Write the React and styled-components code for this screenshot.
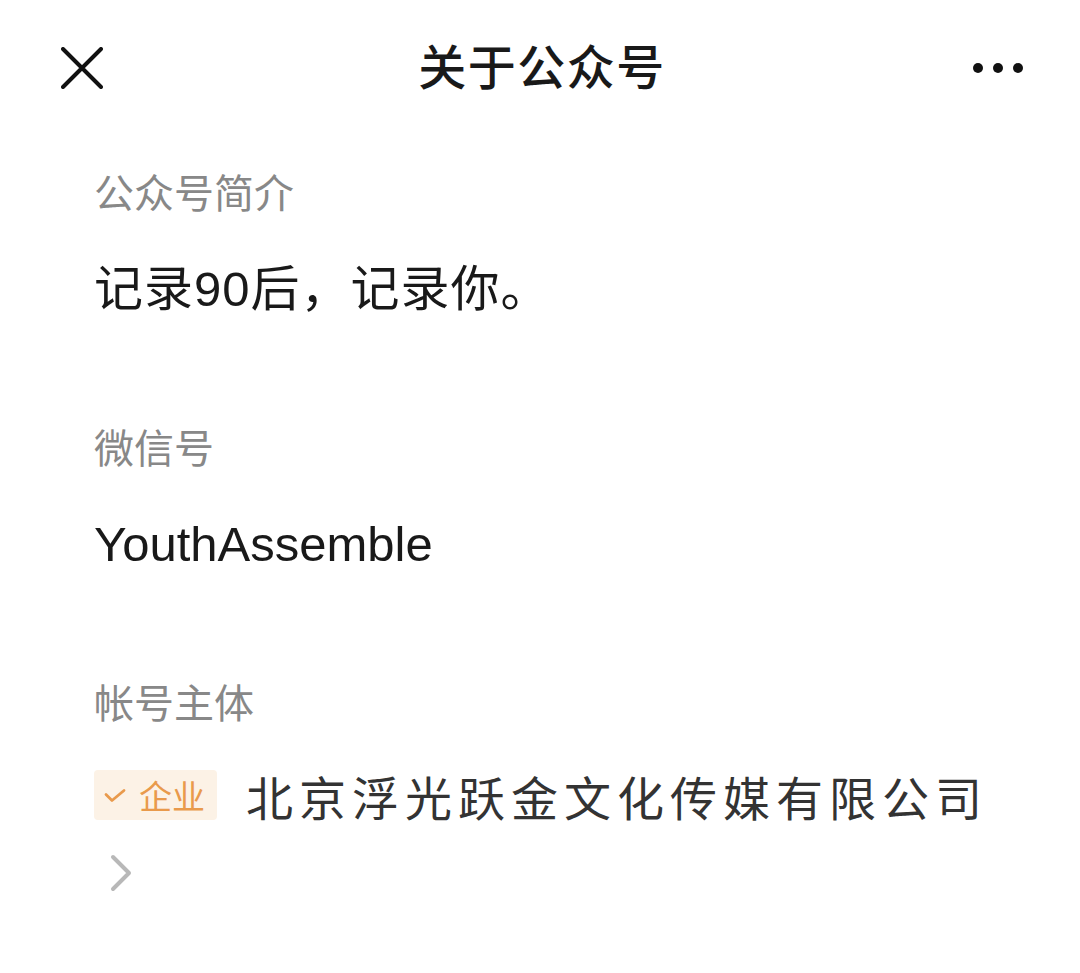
import React from 'react';
import styled, { createGlobalStyle } from 'styled-components';

const GlobalStyle = createGlobalStyle`
    html, body {
        margin: 0;
        padding: 0;
        background: #ffffff;
    }
    body {
        font-family: "Liberation Sans", "Noto Sans CJK SC", sans-serif;
        -webkit-font-smoothing: antialiased;
    }
`;

const Page = styled.div`
    width: 1080px;
    min-height: 973px;
    background: #ffffff;
`;

const Header = styled.header`
    height: 136px;
    display: grid;
    grid-template-columns: 1fr auto 1fr;
    align-items: center;
    padding: 0 57px 0 61px;
    box-sizing: border-box;
`;

const IconButton = styled.button`
    border: none;
    background: none;
    padding: 0;
    margin: 0;
    display: flex;
    align-items: center;
    justify-self: ${props => props.$end ? 'end' : 'start'};
    cursor: pointer;
`;

const Title = styled.h1`
    margin: 0;
    padding-bottom: 8px;
    font-size: 48px;
    font-weight: 500;
    color: #191919;
    letter-spacing: 1.5px;
`;

const Content = styled.main`
    padding: 30px 70px 0 94px;
`;

const Section = styled.section`
    display: flex;
    flex-direction: column;
    margin-bottom: 95px;
`;

const Label = styled.div`
    font-size: 40px;
    line-height: 56px;
    color: #888888;
    margin-bottom: 30px;
`;

const Value = styled.div`
    font-size: 49px;
    line-height: 74px;
    color: #191919;
    letter-spacing: ${props => props.$cjk ? '1px' : '0'};
`;

const OwnerRow = styled.div`
    display: flex;
    align-items: center;
    height: 74px;
    padding-bottom: 8px;
    box-sizing: border-box;
`;

const Badge = styled.span`
    display: inline-flex;
    align-items: center;
    gap: 13px;
    height: 50px;
    padding: 0 12px 0 10px;
    border-radius: 4px;
    background: #fcf2e6;
    color: #e99a4c;
    font-size: 33px;
    margin-right: 29px;
`;

const Company = styled.span`
    font-size: 47px;
    letter-spacing: 6px;
    color: #333333;
    white-space: nowrap;
`;

const More = styled.span`
    display: flex;
    height: 74px;
    align-items: center;
    padding-left: 16px;
`;

const CloseIcon = () => (
    <svg width="42" height="42" viewBox="0 0 42 42">
        <path d="M2 2 L40 40 M40 2 L2 40" stroke="#111" strokeWidth="4" strokeLinecap="round" />
    </svg>
);

const DotsIcon = () => (
    <svg width="50" height="12" viewBox="0 0 50 12">
        <circle cx="5" cy="6" r="5" fill="#111" />
        <circle cx="25" cy="6" r="5" fill="#111" />
        <circle cx="45" cy="6" r="5" fill="#111" />
    </svg>
);

const CheckIcon = () => (
    <svg width="22" height="15" viewBox="0 0 22 15">
        <path d="M2 6.5 L8 12.5 L20 2.5" stroke="#e99a4c" strokeWidth="2.8" fill="none" strokeLinecap="round" strokeLinejoin="round" />
    </svg>
);

const ChevronIcon = () => (
    <svg width="22" height="38" viewBox="0 0 22 38">
        <path d="M3 3 L19 19 L3 35" stroke="#b8b8b8" strokeWidth="4" fill="none" strokeLinecap="round" strokeLinejoin="round" />
    </svg>
);

const App = () => {
    return (
        <Page>
            <GlobalStyle />
            <Header>
                <IconButton aria-label="关闭"><CloseIcon /></IconButton>
                <Title>关于公众号</Title>
                <IconButton $end aria-label="更多"><DotsIcon /></IconButton>
            </Header>
            <Content>
                <Section>
                    <Label>公众号简介</Label>
                    <Value $cjk>记录90后，记录你。</Value>
                </Section>
                <Section>
                    <Label>微信号</Label>
                    <Value>YouthAssemble</Value>
                </Section>
                <Section>
                    <Label>帐号主体</Label>
                    <OwnerRow>
                        <Badge><CheckIcon />企业</Badge>
                        <Company>北京浮光跃金文化传媒有限公司</Company>
                    </OwnerRow>
                    <More><ChevronIcon /></More>
                </Section>
            </Content>
        </Page>
    )
}

export default App
